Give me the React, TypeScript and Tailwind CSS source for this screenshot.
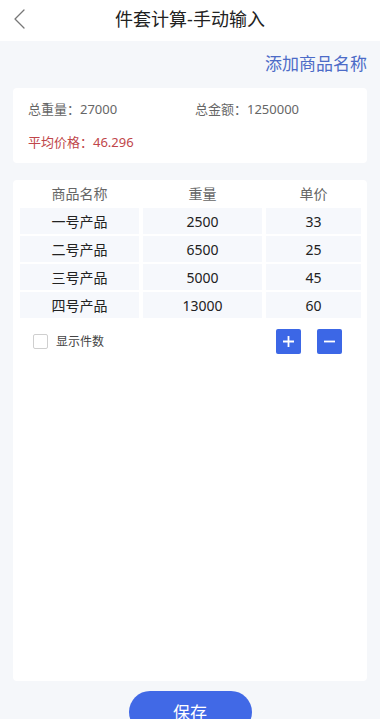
import React from 'react';

const ROWS = [
  { name: '一号产品', weight: '2500', price: '33' },
  { name: '二号产品', weight: '6500', price: '25' },
  { name: '三号产品', weight: '5000', price: '45' },
  { name: '四号产品', weight: '13000', price: '60' },
];

const FONT = { fontFamily: '"Noto Sans", "Noto Sans CJK SC", sans-serif' };

export default function App() {
  return (
    <div className="w-[380px] h-[719px] overflow-hidden bg-[#f5f7fa] flex flex-col" style={FONT}>
      {/* Header */}
      <div className="h-[41px] bg-white flex items-center relative shrink-0">
        <svg className="absolute left-[13px] top-[9px]" width="12" height="20" viewBox="0 0 12 20" fill="none">
          <path d="M11 1L2 10L11 19" stroke="#777" strokeWidth="1.3" strokeLinecap="round" strokeLinejoin="round" />
        </svg>
        <h1 className="w-full text-center text-[18px] leading-none text-[#222] -mt-[4px]">件套计算-手动输入</h1>
      </div>

      {/* Add name link */}
      <div className="flex justify-end pr-[13px] pt-[14px] h-[47px] shrink-0">
        <span className="text-[17px] leading-none text-[#4c6bc7]">添加商品名称</span>
      </div>

      {/* Summary card */}
      <div className="mx-[13px] h-[75px] bg-white rounded-[4px] px-[15px] pt-[15px] shrink-0">
        <div className="flex text-[13px] leading-none text-[#666]">
          <span className="w-[167px]">总重量：27000</span>
          <span>总金额：1250000</span>
        </div>
        <div className="mt-[20px] text-[13px] leading-none text-[#c0464a]">平均价格：46.296</div>
      </div>

      {/* Table card */}
      <div className="mx-[13px] mt-[17px] h-[501px] bg-white rounded-[4px] px-[7px] shrink-0">
        <div className="grid grid-cols-[119px_119px_95px] gap-x-[4px] text-[14px] leading-none text-[#666] h-[28px] items-center">
          <div className="text-center">商品名称</div>
          <div className="text-center">重量</div>
          <div className="text-center">单价</div>
        </div>
        <div className="flex flex-col gap-[2px]">
          {ROWS.map((r) => (
            <div key={r.name} className="grid grid-cols-[119px_119px_95px] gap-x-[4px] text-[14px] text-[#222]">
              <div className="h-[26px] bg-[#f6f8fc] flex items-center justify-center">{r.name}</div>
              <div className="h-[26px] bg-[#f6f8fc] flex items-center justify-center">{r.weight}</div>
              <div className="h-[26px] bg-[#f6f8fc] flex items-center justify-center">{r.price}</div>
            </div>
          ))}
        </div>
        <div className="flex items-center mt-[11px] pl-[13px] pr-[18px] h-[25px]">
          <div className="w-[15px] h-[15px] border border-[#cfcfcf] rounded-[2px] bg-white" />
          <span className="ml-[8px] text-[12px] text-[#444]">显示件数</span>
          <div className="ml-auto flex gap-[16px]">
            <button className="w-[25px] h-[25px] bg-[#3c67e6] rounded-[2px] flex items-center justify-center">
              <svg width="13" height="13" viewBox="0 0 13 13">
                <path d="M6.5 1V12M1 6.5H12" stroke="white" strokeWidth="1.8" />
              </svg>
            </button>
            <button className="w-[25px] h-[25px] bg-[#3c67e6] rounded-[2px] flex items-center justify-center">
              <svg width="13" height="13" viewBox="0 0 13 13">
                <path d="M1 6.5H12" stroke="white" strokeWidth="1.8" />
              </svg>
            </button>
          </div>
        </div>
      </div>

      {/* Save */}
      <div className="flex justify-center mt-[10px] shrink-0">
        <button className="w-[123px] h-[42px] rounded-full bg-[#4169e6] text-white text-[17px] flex items-start justify-center pt-[13px] leading-none">
          保存
        </button>
      </div>
    </div>
  );
}
